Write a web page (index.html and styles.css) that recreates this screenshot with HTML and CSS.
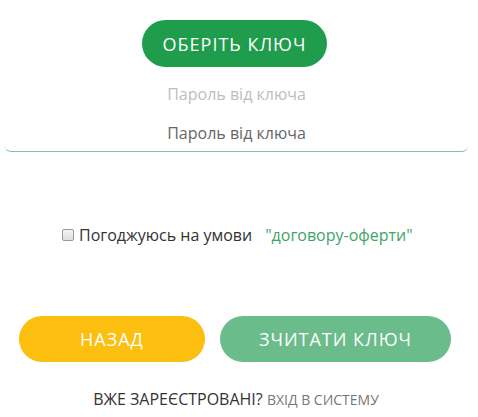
FILE: index.html
```html
<!DOCTYPE html>
<html lang="uk">
<head>
<meta charset="utf-8">
<link rel="stylesheet" href="styles.css">
</head>
<body>
<div class="page">
  <div class="top">
    <button class="btn btn-choose">ОБЕРІТЬ КЛЮЧ</button>
  </div>
  <div class="field">
    <div class="label">Пароль від ключа</div>
    <div class="input">Пароль від ключа</div>
  </div>
  <div class="agree">
    <span class="box"></span>
    <span class="agree-text">Погоджуюсь на умови</span>
    <a class="link">"договору-оферти"</a>
  </div>
  <div class="actions">
    <button class="btn btn-back">НАЗАД</button>
    <button class="btn btn-read">ЗЧИТАТИ КЛЮЧ</button>
  </div>
  <div class="footer">
    <span class="q">ВЖЕ ЗАРЕЄСТРОВАНІ?</span> <span class="login">ВХІД В СИСТЕМУ</span>
  </div>
</div>
</body>
</html>
```

FILE: styles.css
```css
* { box-sizing: border-box; }
html, body { margin: 0; padding: 0; background: #fff; }
body { font-family: "Open Sans", "Noto Sans", sans-serif; color: #333; width: 478px; height: 417px; overflow: hidden; }
.page { display: flex; flex-direction: column; }
.top { display: flex; justify-content: center; padding-top: 20px; padding-right: 9px; }
.btn {
  border: none; border-radius: 24px; color: #fff;
  font-family: "Open Sans", "Noto Sans", sans-serif;
  font-size: 18px; font-weight: 500; letter-spacing: 1px;
  height: 47px; padding: 0; cursor: pointer;
}
.btn-choose { background: #1f9d4c; width: 185px; }
.field { display: flex; flex-direction: column; align-items: center; padding: 0 10px 0 5px; margin-top: 17px; }
.label { font-size: 16px; color: #bdbdbd; line-height: 20px; }
.input {
  width: 100%; text-align: center; font-size: 16px; color: #666;
  line-height: 20px; padding: 19px 0 8px;
  border-bottom: 1px solid #7ebfb1; border-radius: 0 0 6px 6px;
}
.agree { display: flex; align-items: center; padding-left: 62px; margin-top: 73px; font-size: 16px; line-height: 20px; }
.box { width: 12px; height: 12px; border: 1px solid #9a9a9a; border-radius: 2px; background: linear-gradient(#f4f4f4, #dedede); margin-right: 5px; }
.agree-text { color: #333; }
.link { color: #3fa466; margin-left: 13px; }
.actions { display: flex; gap: 15px; padding-left: 19px; margin-top: 71px; }
.btn-back { background: #fdbf0f; width: 186px; height: 46px; }
.btn-read { background: #6abc8b; width: 231px; height: 46px; }
.footer { text-align: center; margin-top: 27px; padding-right: 6px; font-size: 16px; line-height: 20px; }
.q { color: #333; }
.login { color: #777; font-size: 14px; }
```
